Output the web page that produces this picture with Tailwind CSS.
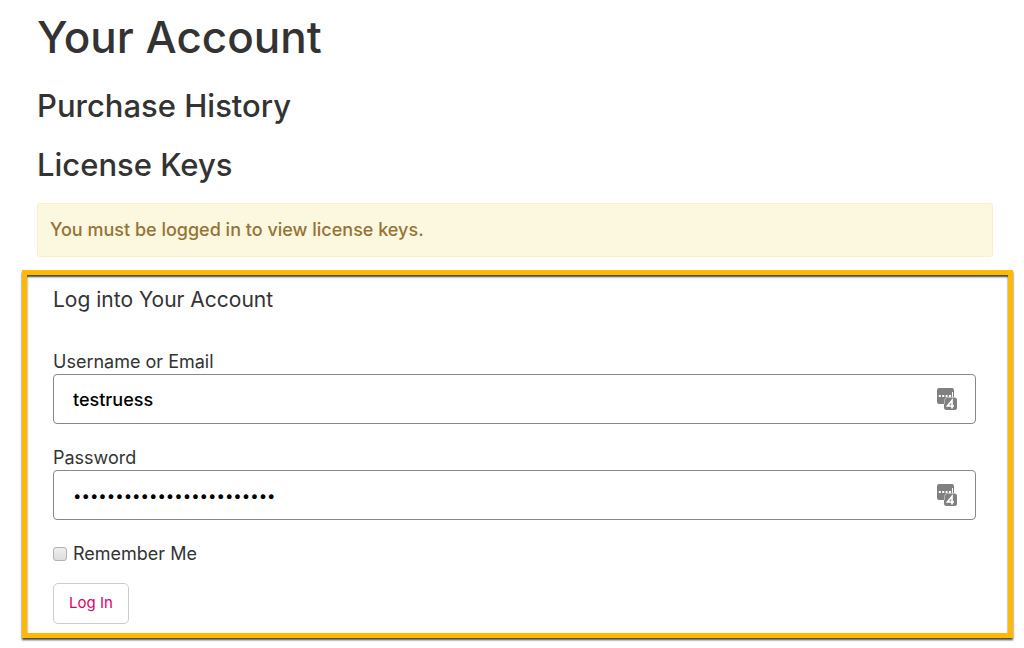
<!DOCTYPE html>
<html lang="en">
<head>
    <meta charset="UTF-8">
    <meta name="viewport" content="width=device-width, initial-scale=1.0">
    <title>Your Account</title>
    <script src="https://cdn.jsdelivr.net/npm/@tailwindcss/browser@4"></script>
</head>
<body class="bg-white pb-2 font-['Inter','Liberation_Sans',sans-serif] text-[#333333]">
    <svg class="hidden">
        <!-- Password manager badge shown inside the inputs -->
        <symbol id="manager" viewBox="0 0 20 22">
            <path fill="#808080" d="M2 0h13a2 2 0 0 1 2 2v16H9a2 2 0 0 1-2-2H2a2 2 0 0 1-2-2V2a2 2 0 0 1 2-2z"/>
            <rect x="7" y="9.500" width="13" height="12.500" rx="2.500" fill="#808080"/>
            <path fill="none" stroke="#ddd" stroke-width=".6" d="M7.500 16v-3.500a3 3 0 0 1 3-3H17"/>
            <path fill="#fff" d="M1.800 7h2v2h-2zM5.200 7h2v2h-2zM8.600 7h2v2h-2zM12 7h2v2h-2zM15 4h1v5h-1z"/>
            <path fill="none" stroke="#fff" stroke-width="1.700" d="M15 20.500v-8L10.500 18H17"/>
        </symbol>
    </svg>

    <header class="px-[37px] pt-3">
        <h1 class="text-[44px] leading-[50px] font-medium">Your Account</h1>
        <h2 class="mt-6 text-[31px] leading-[39px] font-medium">Purchase History</h2>
        <h2 class="mt-5 text-[31px] leading-[39px] font-medium">License Keys</h2>
    </header>

    <p class="mt-[19px] ml-[37px] mr-[31px] rounded-[3px] border border-[#fdeeca] bg-[#fbf8df] px-3 py-[14px] text-[18px] leading-6 font-medium text-[#967337]">You must be logged in to view license keys.</p>

    <main class="mt-[13px] ml-[22px] mr-[11px] border-[5px] border-[#ffba00] pt-[13px] pr-8 pb-[9px] pl-[26px] shadow-[0_2px_2px_#444444] inset-shadow-[0_2px_2px_#444444]">
        <form>
            <h3 class="text-[21px] leading-6">Log into Your Account</h3>

            <label for="username" class="mt-[38px] block text-[18px] leading-6">Username or Email</label>
            <div class="relative">
                <input type="text" id="username" value="testruess" class="block h-[50px] w-full rounded-sm border border-[#888888] px-[19px] text-[18px] font-medium text-black">
                <svg class="absolute top-[14px] right-[19px] h-[22px] w-5"><use href="#manager"/></svg>
            </div>

            <label for="password" class="mt-[22px] block text-[18px] leading-6">Password</label>
            <div class="relative">
                <input type="password" id="password" value="abcdefghijklmnopqrstuvwx" class="block h-[50px] w-full rounded-sm border border-[#888888] px-[19px] text-[15px] text-black">
                <svg class="absolute top-[14px] right-[19px] h-[22px] w-5"><use href="#manager"/></svg>
            </div>

            <div class="mt-[22px] flex items-center gap-[6px]">
                <input type="checkbox" id="remember" class="size-[14px] appearance-none rounded-[3px] border border-[#b2b2b2] bg-linear-to-b from-[#eeeeee] to-[#dddddd]">
                <label for="remember" class="text-[18px] leading-6">Remember Me</label>
            </div>

            <button type="submit" class="mt-[17px] block h-[41px] rounded-[5px] border border-[#cccccc] bg-white px-[15px] text-[15px] text-[#e00069]">Log In</button>
        </form>
    </main>
</body>
</html>
